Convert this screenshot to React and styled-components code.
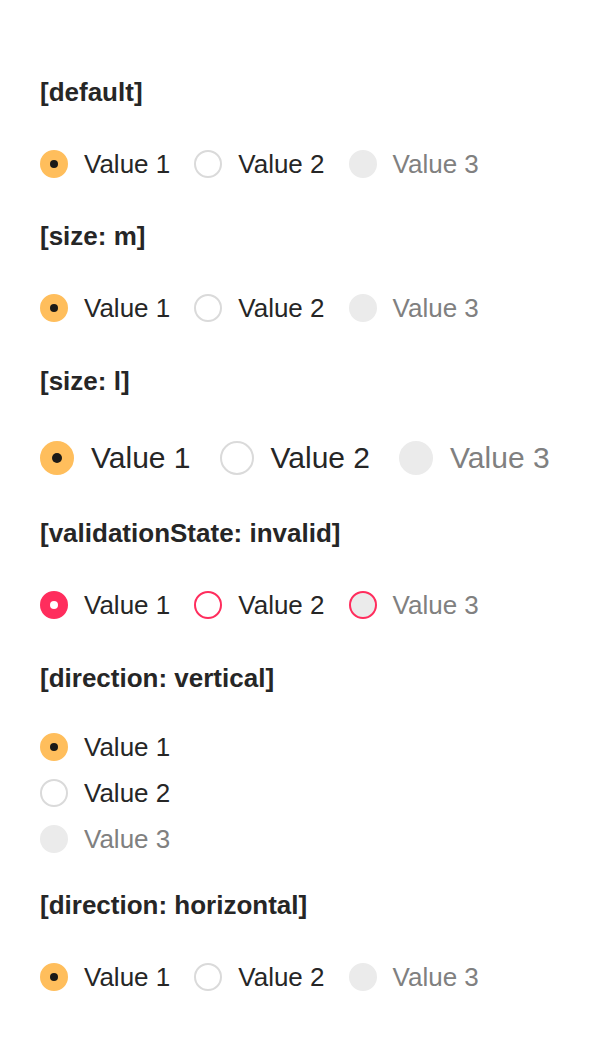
import React from 'react'
import styled, { createGlobalStyle, css } from 'styled-components'

const GlobalStyle = createGlobalStyle`
  html, body {
    margin: 0;
    padding: 0;
    background: #ffffff;
  }
  body {
    font-family: "Liberation Sans", Arial, sans-serif;
    color: #262626;
  }
`

const brand = '#ffbe5c'
const danger = '#ff2d5d'

const sizes = {
  m: { circle: 28, dot: 8, font: 26, line: 36, gap: 24 },
  l: { circle: 34, dot: 10, font: 30, line: 46, gap: 29 },
}

const Page = styled.div`
  display: flex;
  flex-direction: column;
  padding: 77px 40px 40px;
`

const Section = styled.section`
  display: flex;
  flex-direction: column;
  margin-bottom: ${p => p.$after}px;
`

const Heading = styled.h3`
  margin: 0 0 39px;
  font-size: 26px;
  line-height: 30px;
  font-weight: 700;
  color: #262626;
`

const Group = styled.div`
  display: flex;
  flex-direction: ${p => (p.$vertical ? 'column' : 'row')};
  gap: ${p => (p.$vertical ? 10 : sizes[p.$size].gap)}px;
  margin-top: ${p => (p.$vertical ? -3 : 0)}px;
`

const Option = styled.label`
  display: flex;
  align-items: center;
  gap: ${p => (p.$size === 'l' ? 17 : 16)}px;
  height: ${p => sizes[p.$size].line}px;
  font-size: ${p => sizes[p.$size].font}px;
  line-height: ${p => sizes[p.$size].line}px;
  color: ${p => (p.$disabled ? '#808080' : '#262626')};
  white-space: nowrap;
  cursor: ${p => (p.$disabled ? 'default' : 'pointer')};
`

const Control = styled.span`
  position: relative;
  flex: none;
  box-sizing: border-box;
  width: ${p => sizes[p.$size].circle}px;
  height: ${p => sizes[p.$size].circle}px;
  border-radius: 50%;
  border: 2px solid ${p => (p.$invalid ? danger : '#dadada')};
  background: #ffffff;

  ${p => p.$disabled && css`
    background: #ebebeb;
    border-color: ${p.$invalid ? danger : '#ebebeb'};
  `}

  ${p => p.$checked && css`
    background: ${p.$invalid ? danger : brand};
    border-color: ${p.$invalid ? danger : brand};

    &::after {
      content: '';
      position: absolute;
      left: 50%;
      top: 50%;
      width: ${sizes[p.$size].dot}px;
      height: ${sizes[p.$size].dot}px;
      margin: -${sizes[p.$size].dot / 2}px 0 0 -${sizes[p.$size].dot / 2}px;
      border-radius: 50%;
      background: ${p.$invalid ? '#ffffff' : '#1c1a17'};
    }
  `}
`

const options = [
  { value: '1', label: 'Value 1' },
  { value: '2', label: 'Value 2' },
  { value: '3', label: 'Value 3', disabled: true },
]

const RadioGroup = ({ size = 'm', invalid, vertical }) => (
  <Group $size={size} $vertical={vertical}>
    {options.map(({ value, label, disabled }) => (
      <Option key={value} $size={size} $disabled={disabled}>
        <Control
          $size={size}
          $checked={value === '1'}
          $disabled={disabled}
          $invalid={invalid}
        />
        {label}
      </Option>
    ))}
  </Group>
)

const stories = [
  { title: '[default]', after: 39 },
  { title: '[size: m]', after: 40 },
  { title: '[size: l]', size: 'l', after: 37 },
  { title: '[validationState: invalid]', invalid: true, after: 40 },
  { title: '[direction: vertical]', vertical: true, after: 33 },
  { title: '[direction: horizontal]', after: 0 },
]

const App = () => (
  <>
    <GlobalStyle />
    <Page>
      {stories.map(({ title, size, invalid, vertical, after }) => (
        <Section key={title} $after={after}>
          <Heading>{title}</Heading>
          <RadioGroup size={size} invalid={invalid} vertical={vertical} />
        </Section>
      ))}
    </Page>
  </>
)

export default App
